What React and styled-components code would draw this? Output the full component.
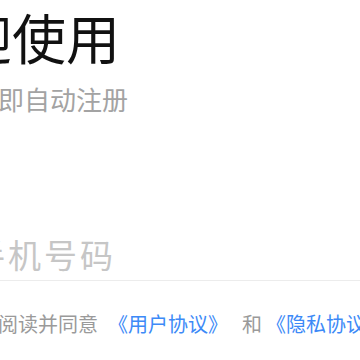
import React, { useState } from 'react'
import styled, { createGlobalStyle } from 'styled-components'

const GlobalStyle = createGlobalStyle`
	html, body {
		margin: 0;
		padding: 0;
		background: #ffffff;
		overflow: hidden;
	}
	body {
		font-family: 'Noto Sans CJK SC', 'Noto Sans', sans-serif;
	}
`

const Page = styled.div`
	width: 360px;
	height: 360px;
	overflow: hidden;
	background: #fff;
`

const Content = styled.div`
	display: flex;
	flex-direction: column;
	margin-left: -88px;
	padding-top: 10px;
	white-space: nowrap;
`

const Title = styled.h1`
	margin: 0 0 0 -8px;
	font-size: 54px;
	line-height: 54px;
	font-weight: 400;
	color: #111111;
`

const Subtitle = styled.p`
	margin: 22px 0 0 8px;
	font-size: 26px;
	line-height: 26px;
	color: #a3a3a3;
`

const PhoneInput = styled.input`
	margin: 116px 0 0 -12px;
	width: 470px;
	height: 52px;
	padding: 0;
	border: none;
	border-bottom: 1px solid #ececec;
	outline: none;
	background: transparent;
	font-family: inherit;
	font-size: 33px;
	letter-spacing: 3px;
	color: #222;
	&::placeholder {
		color: #c6c6c6;
	}
`

const Agreement = styled.label`
	display: flex;
	align-items: center;
	margin-top: 33px;
	font-size: 20px;
	line-height: 20px;
	color: #9a9a9a;
`

const Check = styled.span`
	width: 18px;
	height: 18px;
	border-radius: 50%;
	border: 1px solid ${(p) => (p.checked ? '#3d8af7' : '#cccccc')};
	background: ${(p) => (p.checked ? '#3d8af7' : 'transparent')};
	margin-right: 26px;
	flex-shrink: 0;
`

const Link = styled.a`
	color: #3d8af7;
	text-decoration: none;
	margin-left: ${(p) => p.gap || 0}px;
`

const Joiner = styled.span`
	margin: 0 4px 0 14px;
`

export default function App() {
	const [phone, setPhone] = useState('')
	const [agreed, setAgreed] = useState(false)

	return (
		<Page>
			<GlobalStyle />
			<Content>
				<Title>欢迎使用</Title>
				<Subtitle>验证后即自动注册</Subtitle>
				<PhoneInput
					type='tel'
					placeholder='输入手机号码'
					value={phone}
					onChange={(e) => setPhone(e.target.value)}
				/>
				<Agreement onClick={() => setAgreed(!agreed)}>
					<Check checked={agreed} />
					我已阅读并同意
					<Link href='#' gap={10}>《用户协议》</Link>
					<Joiner>和</Joiner>
					<Link href='#'>《隐私协议》</Link>
				</Agreement>
			</Content>
		</Page>
	)
}
